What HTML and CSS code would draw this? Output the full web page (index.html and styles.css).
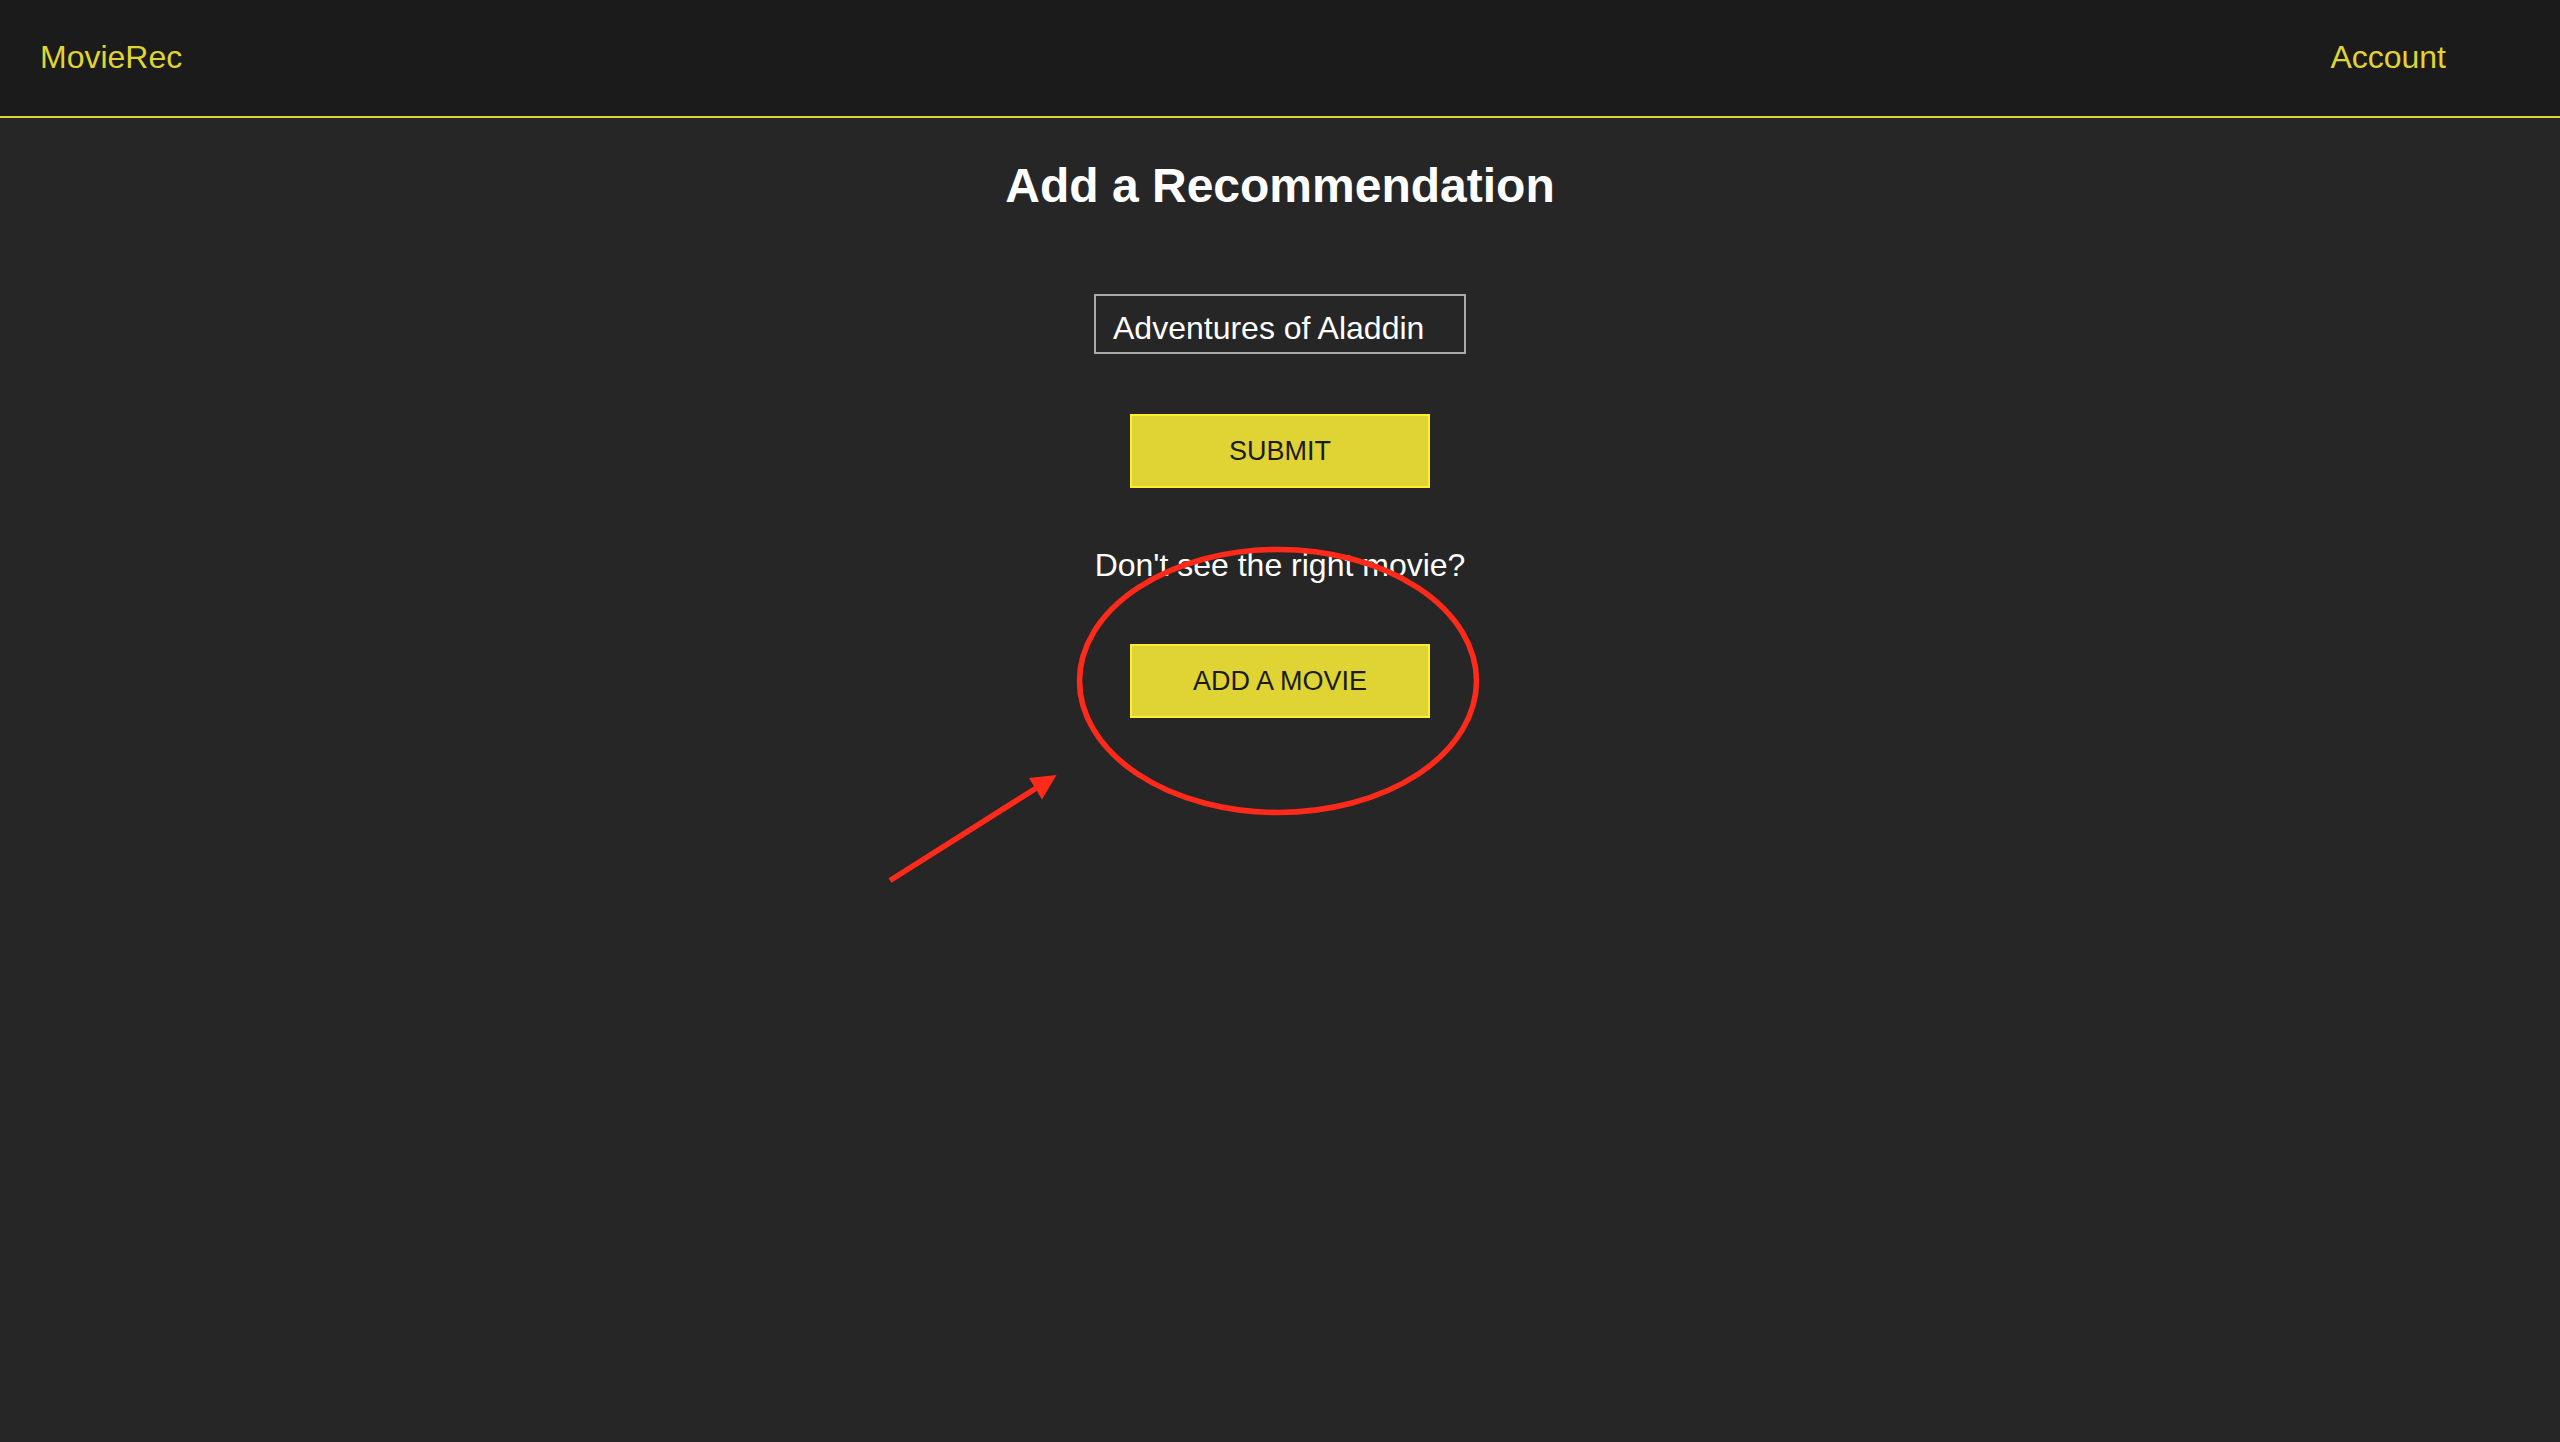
FILE: index.html
```html
<!DOCTYPE html>
<html lang="en">
<head>
  <meta charset="utf-8">
  <meta name="viewport" content="width=device-width, initial-scale=1">
  <title>MovieRec - Add a Recommendation</title>
  <link rel="stylesheet" href="styles.css">
</head>
<body>
  <header class="site-header">
    <a class="nav-link" href="#home">MovieRec</a>
    <nav class="site-nav">
      <a class="nav-link" href="#account">Account</a>
    </nav>
  </header>

  <main class="page">
    <h1 class="page-title">Add a Recommendation</h1>
    <form class="rec-form">
      <select class="movie-select" name="movie" aria-label="Movie">
        <option selected>Adventures of Aladdin</option>
      </select>
      <button class="btn" type="submit">SUBMIT</button>
    </form>
    <section class="add-movie">
      <p class="prompt">Don't see the right movie?</p>
      <button class="btn" type="button">ADD A MOVIE</button>
      <svg class="callout" viewBox="0 0 620 360" aria-hidden="true">
        <ellipse cx="398" cy="141" rx="198.5" ry="131.5" fill="none" stroke="#ff2a1a" stroke-width="5.6"/>
        <path d="M10 340.500 L158 247" stroke="#ff2a1a" stroke-width="5.6" fill="none"/>
        <path d="M176.500 235 L149 238 L162 259.500 Z" fill="#ff2a1a"/>
      </svg>
    </section>
  </main>
</body>
</html>
```
FILE: styles.css
```css
* {
  box-sizing: border-box;
}

body {
  margin: 0;
  min-height: 100vh;
  background: #262626;
  color: #fff;
  font-family: "Liberation Sans", Arial, Helvetica, sans-serif;
  font-size: 32px;
  line-height: 36px;
}

.site-header {
  display: flex;
  justify-content: space-between;
  padding: 39px 114px 41px 40px;
  background: #1b1b1b;
  border-bottom: 2px solid #dfd433;
}

.nav-link {
  color: #dfd433;
  text-decoration: none;
}

.page {
  display: flex;
  flex-direction: column;
  align-items: center;
  padding-top: 40px;
}

.page-title {
  margin: 0;
  font-size: 48px;
  line-height: 56px;
}

.rec-form {
  display: flex;
  flex-direction: column;
  align-items: center;
  gap: 60px;
  margin-top: 80px;
}

.movie-select {
  appearance: none;
  width: 372px;
  height: 60px;
  padding: 14px 16px 6px 17px;
  border: 2px solid #a9a9a9;
  border-radius: 0;
  background: transparent;
  color: #fff;
  font: inherit;
}

.btn {
  width: 300px;
  height: 74px;
  padding: 0;
  border: 2px solid #fdee30;
  border-radius: 0;
  background: #dfd433;
  color: #1b1b1b;
  font-family: inherit;
  font-size: 27px;
}

.add-movie {
  position: relative;
  display: flex;
  flex-direction: column;
  align-items: center;
  gap: 61px;
  margin-top: 59px;
}

.prompt {
  margin: 0;
}

/* Hand-drawn highlight over the add button */
.callout {
  position: absolute;
  top: -7px;
  left: calc(50% - 400px);
  width: 620px;
  height: 360px;
  pointer-events: none;
}
```
